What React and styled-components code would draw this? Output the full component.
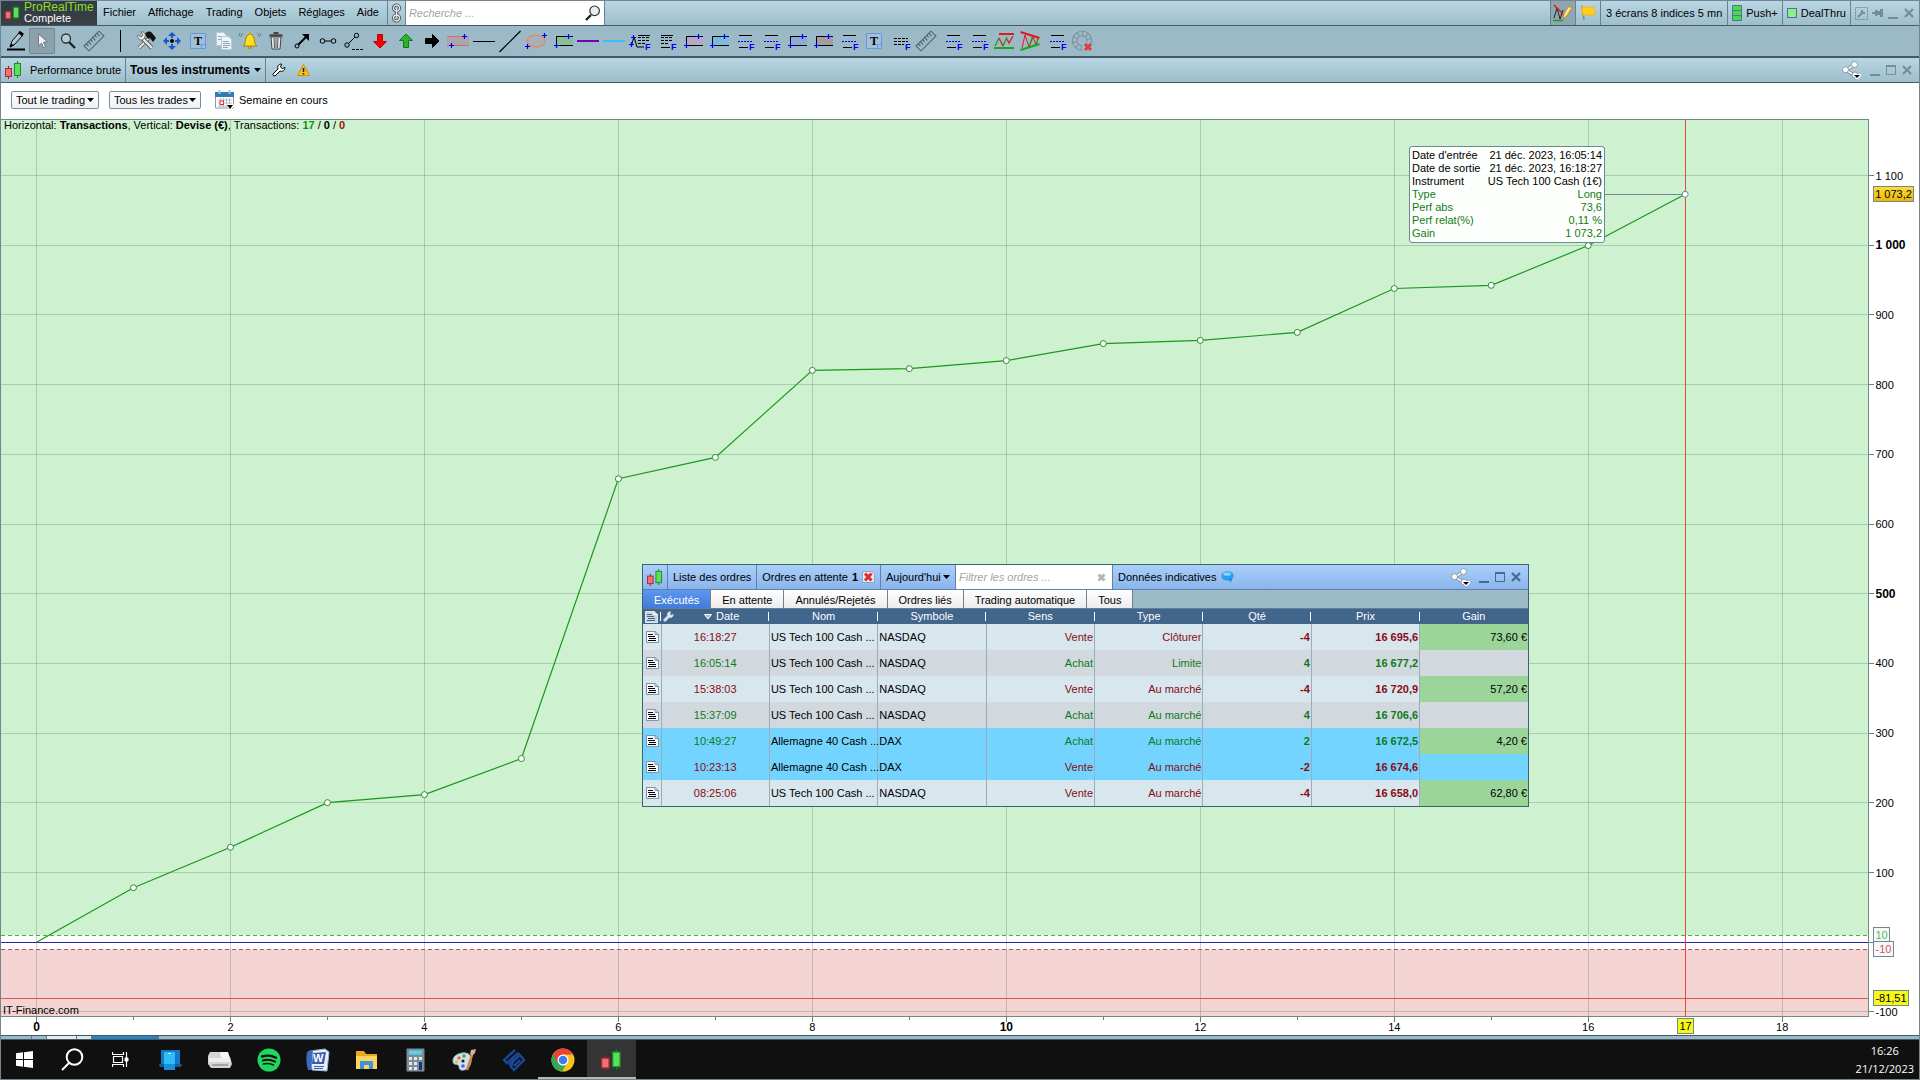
import React, {useLayoutEffect, useRef, useState} from 'react';
import styled, {createGlobalStyle} from 'styled-components';

const GlobalStyle = createGlobalStyle`
  * {
    box-sizing: border-box;
  }

  body {
    margin: 0;
    background: #ffffff;
    color: #000000;
    font: 11px/13px "Liberation Sans", Arial, sans-serif;
  }

  button, input, select {
    margin: 0;
    padding: 0;
    border: none;
    border-radius: 0;
    background: none;
    color: inherit;
    font: inherit;
    outline: none;
  }

  svg {
    display: block;
    flex: none;
  }
`;

const Page = styled.div`
  display: flex;
  flex-direction: column;
  height: 100vh;
  min-height: 720px;
  border: 1px solid #74858f;
  overflow: hidden;
`;

const Bar = styled.div`
  display: flex;
  flex: none;
  height: 25px;
  background: linear-gradient(#b8d6e3, #9fbecc);
  border-bottom: 1px solid #425a68;
`;

const Cell = styled.div`
  display: flex;
  align-items: center;
  gap: ${p => p.$gap || 0}px;
  padding: 0 ${p => p.$pad === undefined ? 5 : p.$pad}px;
  background: ${p => p.$pressed ? '#8fa5b0' : 'none'};
  border-right: ${p => p.$line ? `1px solid ${p.$blue ? '#5c83b0' : '#67818f'}` : 'none'};
  white-space: nowrap;
`;

const Spacer = styled.div`
  flex: 1;
`;

const IconButton = styled.button`
  display: grid;
  place-items: center;
  flex: none;
  width: ${p => p.$w || 16}px;
  height: 100%;
  color: ${p => p.$hue || '#778c99'};
  cursor: pointer;
`;

const TextButton = styled.button`
  display: flex;
  align-items: center;
  gap: 4px;
  height: 100%;
  padding: 0 ${p => p.$pad || 0}px;
  white-space: nowrap;
  cursor: pointer;
`;

const Brand = styled.div`
  display: flex;
  align-items: center;
  gap: 4px;
  width: 96px;
  padding-left: 4px;
  background: linear-gradient(#2f3b42, #394046);
  color: #ffffff;
  line-height: 11px;
`;

const BrandName = styled.div`
  font-size: 12px;
  color: #8fdc25;
`;

const Menu = styled.nav`
  display: flex;
  padding-right: 2px;
  padding-bottom: 1px;
  border-right: 1px solid #67818f;
`;

const SearchBox = styled.label`
  display: flex;
  align-items: center;
  width: ${p => p.$w}px;
  padding: 0 3px;
  background: #ffffff;
  border-right: 1px solid ${p => p.$blue ? '#5c83b0' : '#67818f'};
`;

const SearchInput = styled.input`
  flex: 1;
  min-width: 0;
  height: 100%;

  &::placeholder {
    color: #a5a5a5;
    font-style: italic;
    opacity: 1;
  }
`;

const Toolbar = styled.div`
  display: flex;
  flex: none;
  height: 32px;
  padding: 0 2px;
  background: #9bb9c6;
  border-bottom: 2px solid #435966;
`;

const ToolButton = styled.button`
  flex: none;
  width: 26px;
  height: 26px;
  margin: 2px 0;
  background: ${p => p.$active ? '#8ba2ad' : 'none'};
  box-shadow: ${p => p.$active ? 'inset 0 0 0 1px #718792' : 'none'};
  border-radius: 2px;
`;

const Divider = styled.div`
  width: 1px;
  height: 22px;
  margin: 4px 12px 4px 13px;
  background: #000000;
`;

const Filters = styled.div`
  display: flex;
  flex: none;
  align-items: center;
  gap: 10px;
  height: 36px;
  padding: 0 10px 2px;
`;

const SelectWrap = styled.div`
  display: inline-grid;
  align-items: center;
  height: ${p => p.$boxed ? '18px' : '100%'};
  border: ${p => p.$boxed ? '1px solid #7b8b97' : 'none'};
  border-radius: 2px;
  background: ${p => p.$boxed ? 'linear-gradient(#ffffff, #eef1f4)' : 'none'};

  > * {
    grid-area: 1 / 1;
  }

  > svg {
    justify-self: end;
    margin-right: ${p => p.$boxed ? 4 : 0}px;
    pointer-events: none;
  }
`;

const Select = styled.select`
  appearance: none;
  height: 100%;
  padding-left: ${p => p.$boxed ? 4 : 0}px;
  padding-right: ${p => p.$boxed ? 12 : p.$bold ? 11 : 9}px;
  font-weight: ${p => p.$bold ? 'bold' : 'normal'};
  font-size: ${p => p.$bold ? 12 : 11}px;
`;

const PeriodButton = styled(TextButton)`
  margin-left: 3px;
`;

const ChartArea = styled.main`
  position: relative;
  flex: 1;
  min-height: 0;
`;

const ChartSvg = styled.svg`
  position: absolute;
  inset: 0;

  text {
    font-size: 11px;
  }

  text.major {
    font-size: 12px;
    font-weight: bold;
  }
`;

const Legend = styled.div`
  position: absolute;
  left: 3px;
  top: 0;
`;

const Hue = styled.b`
  color: ${p => p.$hue};
`;

const Tip = styled.dl`
  position: absolute;
  width: 196px;
  margin: 0;
  padding: 2px;
  background: rgba(255, 255, 255, 0.94);
  border: 1px solid #6d8894;
  border-radius: 3px;
`;

const TipRow = styled.div`
  display: flex;
  justify-content: space-between;
  color: ${p => p.$green ? '#127c16' : '#000000'};

  dd {
    margin: 0;
  }
`;

const OrdersWindow = styled.section`
  position: absolute;
  left: 641px;
  top: 445px;
  width: 887px;
  border: 1px solid #3f6272;
  background: #9bb9c6;
`;

const OrdersBar = styled(Bar)`
  background: linear-gradient(#abcffb, #8bb5ea);
  border-color: #5c83b0;
`;

const Tabs = styled.div`
  display: flex;
  height: 19px;
  border-bottom: 1px solid #5f7f92;
`;

const Tab = styled.button`
  padding: 2px 11px 0;
  border-right: 1px solid #6f838d;
  background: ${p => p.$active ? 'linear-gradient(#5f97ee, #427bd8)' : 'linear-gradient(#ffffff, #ececec)'};
  color: ${p => p.$active ? '#ffffff' : '#000000'};
`;

const Table = styled.table`
  width: 100%;
  table-layout: fixed;
  border-collapse: collapse;
`;

const Th = styled.th`
  height: 15px;
  padding: 0;
  background: ${p => p.$last ? '#41658b' : 'linear-gradient(#ffffff, #ffffff) right center / 1px 9px no-repeat #41658b'};
  color: #ffffff;
  font-weight: normal;
`;

const ThInner = styled.div`
  display: flex;
  align-items: center;
  justify-content: ${p => p.$center ? 'center' : 'flex-start'};
  padding-left: ${p => p.$center ? 0 : 2}px;
`;

const SortLabel = styled.span`
  display: flex;
  flex: 1;
  align-items: center;
  justify-content: center;
  gap: 4px;
`;

const rowFill = {light: '#d8e6ed', grey: '#d1d8de', blue: '#73d5ff'};

const Tr = styled.tr`
  height: 26px;
  background: ${p => rowFill[p.$fill]};
`;

const Td = styled.td`
  padding: 0 1px;
  text-align: ${p => p.$align || 'left'};
  color: ${p => p.$side === 'sell' ? '#8b0a14' : p.$side === 'buy' ? '#0e7a1c' : '#000000'};
  font-weight: ${p => p.$bold ? 'bold' : 'normal'};
  background: ${p => p.$gain ? '#9bd59a' : 'none'};
  border-right: ${p => p.$last ? 'none' : '1px solid #9cadb8'};
  white-space: nowrap;
`;

const Strip = styled.div`
  display: flex;
  flex: none;
  height: 5px;
  background: #9bb9c6;
  border-top: 1px solid #425a68;
  border-bottom: 1px solid #425a68;
`;

const StripPart = styled.div`
  width: ${p => p.$w}px;
  background: ${p => p.$hue || 'none'};
  border-right: 1px solid #5f7886;
`;

const Taskbar = styled.footer`
  display: flex;
  flex: none;
  height: 39px;
  background: #101010;
  color: #ffffff;
`;

const TaskGroup = styled.div`
  display: flex;
  margin-right: 2px;
`;

const TaskButton = styled.button`
  display: grid;
  place-items: center;
  width: ${p => p.$w || 49}px;
  background: ${p => p.$active ? '#343434' : 'none'};
  box-shadow: ${p => p.$open ? 'inset 0 -2px 0 #b8b8b8' : 'none'};
`;

const Clock = styled.time`
  display: flex;
  flex-direction: column;
  justify-content: center;
  margin-left: auto;
  padding-right: 5px;
  text-align: center;
  font: 11px/18px "Open Sans", "Noto Sans", sans-serif;
`;

// ---- small icons ----

const Caret = () => (
	<svg width="7" height="4" viewBox="0 0 7 4"><path d="M0 0h7L3.5 4z" fill="#000"/></svg>
);

const Candles = ({w = 17, h = 18}) => (
	<svg width={w} height={h} viewBox="0 0 17 18">
		<path d="M3.5 5v13" stroke="#a01820"/>
		<rect x="0.5" y="7.5" width="6" height="8" fill="#f07078" stroke="#b02830"/>
		<path d="M12.5 0v17" stroke="#108020"/>
		<rect x="9.5" y="2.5" width="6" height="12" fill="#5ce05c" stroke="#189028"/>
	</svg>
);

const Lens = ({size = 16}) => (
	<svg width={size} height={size} viewBox="0 0 16 16">
		<path d="M6 10L1 15" stroke="#222" strokeWidth="2.4"/>
		<circle cx="9.6" cy="5.8" r="4.8" fill="#e8eef0" stroke="#333" strokeWidth="1.2"/>
	</svg>
);

const Chain = () => (
	<svg width="11" height="20" viewBox="0 0 11 20" fill="none">
		<g stroke="#4a4f52" strokeWidth="3">
			<rect x="2.5" y="2" width="6" height="6" rx="3"/>
			<rect x="2.5" y="12" width="6" height="6" rx="3"/>
			<path d="M5.5 6v8"/>
		</g>
		<g stroke="#e8e8e8" strokeWidth="1.3">
			<rect x="2.5" y="2" width="6" height="6" rx="3"/>
			<rect x="2.5" y="12" width="6" height="6" rx="3"/>
			<path d="M5.5 6v8"/>
		</g>
	</svg>
);

const Wrench = ({size = 14, fill = '#fff', stroke = '#000'}) => (
	<svg width={size} height={size} viewBox="0 0 14 14">
		<path
			d="M1 11l5-5C5 3.500 6.500 1 9.500 1L8.600 4.200l1.600 1.400L13 4.500C13 7.500 10.500 9 8 8l-5 5c-1.500 0-2.500-1-2-2z"
			fill={fill} stroke={stroke}
		/>
	</svg>
);

const Warning = () => (
	<svg width="13" height="12" viewBox="0 0 13 12">
		<path d="M6.500 0.500L12.500 11.500H0.500z" fill="#fdc321" stroke="#d08a10" strokeLinejoin="round"/>
		<path d="M6.500 4v4M6.500 9v1.500" stroke="#222" strokeWidth="1.600"/>
	</svg>
);

const Share = () => (
	<svg width="20" height="18" viewBox="0 0 20 18">
		<path d="M12 4L4 9l8 5" fill="none" stroke="#6a7c86" strokeWidth="3"/>
		<path d="M12 4L4 9l8 5" fill="none" stroke="#fff" strokeWidth="1.600"/>
		<g fill="#fff" stroke="#7b8c96" strokeWidth="0.800">
			<circle cx="12.500" cy="3.500" r="3"/>
			<circle cx="3.500" cy="8.800" r="3"/>
			<circle cx="13" cy="14" r="3"/>
		</g>
		<path d="M11 13h8v2l-3 3h-2z" fill="#fff"/>
		<path d="M12 14h6l-3 3z" fill="#000"/>
	</svg>
);

const Minimize = () => (
	<svg width="10" height="12" viewBox="0 0 10 12"><path d="M0 11h10" stroke="currentColor" strokeWidth="2"/></svg>
);

const Maximize = () => (
	<svg width="10" height="10" viewBox="0 0 10 10">
		<path d="M0.500 0v9.500h9V0" fill="none" stroke="currentColor"/>
		<path d="M0 1h10" stroke="currentColor" strokeWidth="2"/>
	</svg>
);

const Close = () => (
	<svg width="10" height="10" viewBox="0 0 10 10">
		<path d="M1 1l8 8M9 1L1 9" stroke="currentColor" strokeWidth="2.200"/>
	</svg>
);

const WrenchBox = () => (
	<svg width="13" height="13" viewBox="0 0 13 13" fill="none" stroke="currentColor">
		<rect x="0.500" y="0.500" width="12" height="12" strokeDasharray="2 1"/>
		<path d="M3 10l4-4M7 3v3h3" strokeWidth="2"/>
	</svg>
);

const Pin = () => (
	<svg width="11" height="10" viewBox="0 0 11 10" fill="currentColor">
		<path d="M0 4h3V2h2l1 1h2V1h3v8H8V7H6L5 8H3V6H0z"/>
	</svg>
);

const DrawMode = () => (
	<svg width="20" height="18" viewBox="0 0 20 18" fill="none">
		<path d="M1 14L4 4l3 11 3-9" stroke="#222"/>
		<path d="M1 1l9 9" stroke="#d02020" strokeWidth="1.600"/>
		<path d="M0 16.500h10" stroke="#18a018" strokeWidth="1.500"/>
		<path d="M10 15l1-5 5-8 3 2-5 8z" fill="#fcd24c" stroke="#a87820" strokeWidth="0.600"/>
		<path d="M12 11l4-7" stroke="#fff0c0" strokeWidth="1.200"/>
	</svg>
);

const Flag = () => (
	<svg width="16" height="16" viewBox="0 0 16 16">
		<path d="M2 1l2 14" stroke="#888" strokeWidth="1.500"/>
		<path d="M1.500 2.500C5 0 9 4 14 1.500l1 8C10 12 7 8 3 10.500z" fill="#ffcf1a" stroke="#f0a800" strokeWidth="0.600"/>
	</svg>
);

const PushLevels = () => (
	<svg width="10" height="16" viewBox="0 0 10 16">
		<path d="M0.500 0.500h9v15h-9z" fill="#4cd84c" stroke="#4a7890"/>
		<path d="M0 5.500h10M0 10.500h10" stroke="#4a7890"/>
	</svg>
);

const DealBox = () => (
	<svg width="10" height="10" viewBox="0 0 10 10"><rect x="0.500" y="0.500" width="9" height="9" fill="#8cee8c" stroke="#4a7890"/></svg>
);

const Calendar = () => (
	<svg width="21" height="20" viewBox="0 0 21 20">
		<path d="M1.500 3h18v15h-18z" fill="#fff" stroke="#8a9aa8"/>
		<path d="M1 2h19v5H1z" fill="#2e7fb4"/>
		<path d="M4 10h14M4 13h14M4 16h9M6.500 8v9M9.500 8v9M12.500 8v9M15.500 8v6" stroke="#b4c0ca"/>
		<rect x="6" y="11" width="3.500" height="3.500" fill="#fff" stroke="#e03030"/>
		<path d="M5.500 0v4M15.500 0v4" stroke="#a8c4d4" strokeWidth="2"/>
		<path d="M12 14.500h8v2l-3 3h-2z" fill="#fff"/>
		<path d="M13 15h6l-3 4z" fill="#000"/>
	</svg>
);

const RedCross = () => (
	<svg width="13" height="12" viewBox="0 0 13 12">
		<path d="M0.500 0.500h9l3 2v9h-12z" fill="#e4ecf4" stroke="#8ca4c0"/>
		<path d="M3 2.500l6.500 7M9.500 2.500L3 9.500" stroke="#e8282e" strokeWidth="3"/>
	</svg>
);

const ClearCross = () => (
	<svg width="9" height="9" viewBox="0 0 9 9"><path d="M1.500 1.500l6 6M7.500 1.500l-6 6" stroke="#b4b8bc" strokeWidth="3"/></svg>
);

const Bubble = () => (
	<svg width="13" height="12" viewBox="0 0 13 12">
		<ellipse cx="6.500" cy="5" rx="6.200" ry="4.800" fill="#28a0ec"/>
		<path d="M8 8l2 4 1-5z" fill="#1c88d4"/>
		<ellipse cx="6" cy="3" rx="4" ry="1.800" fill="#8cd4fc"/>
	</svg>
);

const Doc = ({light}) => (
	<svg width="13" height="12" viewBox="0 0 13 12">
		<path d="M0.500 0.500h8.500l3.500 3v8H0.500z" fill={light ? '#c8d4e0' : '#f6fafc'} stroke={light ? '#dfe8f0' : '#7c94ac'}/>
		<path d="M9 0.500v3h3.500" fill="none" stroke={light ? '#fff' : '#7c94ac'}/>
		<path d="M2 3.500h5M2 5.500h7M3 7.500h7M2 9.500h8" stroke={light ? '#4a6684' : '#000'}/>
	</svg>
);

const SortArrow = () => (
	<svg width="8" height="6" viewBox="0 0 8 6"><path d="M0.500 0.500h7L4 5z" fill="#a8bccf" stroke="#fff"/></svg>
);

// ---- drawing tools, 26x26 each ----

const Plus = ({x, y}) => (
	<path d={`M${x - 2.5} ${y}h5M${x} ${y - 2.5}v5`} stroke="#0000f0" strokeWidth="1.2"/>
);

const LetterF = () => (
	<text x="18" y="22" fontSize="9" fontWeight="bold" fill="#0000f0">F</text>
);

const Ruler = () => (
	<g transform="rotate(-45 13 13)" fill="none" stroke="#4c5a62">
		<rect x="2.500" y="9.500" width="21" height="7"/>
		<path d="M5.500 9.500v3M8.500 9.500v4M11.500 9.500v3M14.500 9.500v4M17.500 9.500v3M20.500 9.500v4"/>
	</g>
);

const TextTool = () => (
	<g>
		<path d="M5.500 5.500h15v15h-15z" fill="#a2c0d8" stroke="#6196ea"/>
		<path d="M20.500 16.500h-4v4" fill="none" stroke="#6196ea"/>
		<text x="13" y="17" fontSize="12" fontWeight="bold" textAnchor="middle" fontFamily="Liberation Serif, serif">T</text>
	</g>
);

const BoxTool = ({fill}) => (
	<g>
		<path d="M7 9h17v8H7z" fill={fill}/>
		<path d="M24 8.500H7.500v9H24" fill="none" stroke="#000" shapeRendering="crispEdges"/>
		<Plus x={7.5} y={17.5}/>
		<Plus x={19.5} y={8.5}/>
	</g>
);

const LevelsTool = () => (
	<g shapeRendering="crispEdges">
		<path d="M8 7.500h13M8 19.500h9" stroke="#000"/>
		<path d="M7 13.500h14" stroke="#0000f0" strokeDasharray="2 1"/>
		<LetterF/>
	</g>
);

const FibLines = () => (
	<g stroke="#000" shapeRendering="crispEdges">
		<path d="M11 7.500h12"/>
		<path d="M11 9.500h12M11 12.500h12M11 15.500h8" strokeDasharray="3 1"/>
	</g>
);

const BlockArrow = ({turn = 0, fill, stroke = fill}) => (
	<path d="M10.500 6.500h5v7h4l-6.500 6.500-6.500-6.500h4z" fill={fill} stroke={stroke} transform={`rotate(${turn} 13 13)`}/>
);

const tools = [
	['Dessin', <g>
		<path d="M4 21.500h18" stroke="#000" strokeWidth="2"/>
		<path d="M7 19l2-6 7-8 4 2-8 9z" fill="#b4c8d0" stroke="#000"/>
		<path d="M16 4l4 3" stroke="#000" strokeWidth="3"/>
		<path d="M7 19.500l1-4 3 2z" fill="#000"/>
	</g>],
	['Pointeur', <path d="M9.500 6v12l3-3 2 5 2-1-2-5h4z" fill="#f2f2f2" stroke="#5c6c76" strokeWidth="0.8"/>],
	['Loupe', <g>
		<path d="M14 14l6 6" stroke="#222" strokeWidth="2.4"/>
		<circle cx="11" cy="10.5" r="4.5" fill="#b4ccd6" stroke="#333" strokeWidth="1.3"/>
	</g>],
	['Mesure', <Ruler/>],
	null,
	['Outils', <g>
		<path d="M6 20L16 10" stroke="#555" strokeWidth="3.4"/>
		<path d="M6 20L16 10" stroke="#eee" strokeWidth="1.8"/>
		<path d="M12 6c2-3 5-3 7-1l4 5-3 4-3-4-2 1z" fill="#111"/>
		<path d="M9 10l10 10" stroke="#555" strokeWidth="4"/>
		<path d="M9 10l10 10" stroke="#e8e8e8" strokeWidth="2.4"/>
		<path d="M5 7l3 2 2-2-2-3c3-1 5 2 4 5s-4 4-6 2-2-3-1-4z" fill="#eee" stroke="#555" strokeWidth="0.8"/>
	</g>],
	['Déplacer', <g fill="#1558c8">
		<path d="M13 4l4 4h-3v2h-2V8H9zM13 22l4-4h-3v-2h-2v2H9zM4 13l4-4v3h2v2H8v3zM22 13l-4-4v3h-2v2h2v3z"/>
		<circle cx="13" cy="13" r="2" fill="#000"/>
	</g>],
	['Texte', <TextTool/>],
	['Copier', <g fill="#edf3f6" stroke="#b8cbd4">
		<path d="M5.500 4.500h7l3 3v10h-10z"/>
		<path d="M10.500 8.500h7l3 3v10h-10z"/>
		<path d="M12 13.500h6M12 15.500h7M12 17.500h7M12 19.500h5M7 8.500h3M7 11.500h3" stroke="#8fa4b0"/>
	</g>],
	['Alerte', <g>
		<path d="M6 18c3-2 2-5 3-8 1-3 3-4 4-4s3 1 4 4c1 3 0 6 3 8z" fill="#ffdf20" stroke="#a08000"/>
		<path d="M11 19h4v2h-4z" fill="#c89c00"/>
		<path d="M12 4h2v2h-2z" fill="#d8b000"/>
		<path d="M6 5c-2 1-2 3-2 4M3 5L2 8M20 5c2 1 2 3 2 4M23 5l1 3" fill="none" stroke="#6c7c86"/>
	</g>],
	['Supprimer', <g>
		<path d="M8 9h10l-1 12H9z" fill="#ececec" stroke="#444"/>
		<path d="M6.500 7.500h13" stroke="#444" strokeWidth="2.4"/>
		<path d="M10.500 5h5" stroke="#444" strokeWidth="2"/>
		<path d="M11 10l.5 10M13 10v10M15 10l-.5 10" stroke="#555"/>
	</g>],
	['Flèche', <g>
		<path d="M8 18L17 9" stroke="#000" strokeWidth="2"/>
		<path d="M13 6h7v7z" fill="#000"/>
		<circle cx="8" cy="18" r="2" fill="#9bb9c6" stroke="#000"/>
	</g>],
	['Segment', <g fill="none" stroke="#000">
		<circle cx="7.500" cy="13" r="2.300"/>
		<path d="M10 13h6"/>
		<circle cx="18.500" cy="13" r="2.300"/>
	</g>],
	['Segment prolongé', <g fill="none" stroke="#000">
		<circle cx="6" cy="17" r="2.200"/>
		<path d="M8 15l6-6"/>
		<path d="M11 21.500h11" strokeDasharray="3 1"/>
		<circle cx="15.500" cy="7.500" r="2.200"/>
	</g>],
	['Vente', <BlockArrow fill="#f40000" stroke="#c00000"/>],
	['Achat', <BlockArrow fill="#28b428" stroke="#147814" turn={180}/>],
	['Flèche droite', <BlockArrow fill="#000" turn={-90}/>],
	['Canal', <g>
		<path d="M2 9h22v8H2z" fill="#c8888860"/>
		<path d="M2 8.500h22M2 17.500h22" stroke="#d86c6c"/>
		<Plus x={6.5} y={17.5}/>
		<Plus x={19.5} y={8.5}/>
	</g>],
	['Ligne horizontale', <path d="M2 13.500h22" stroke="#000"/>],
	['Ligne', <path d="M2.500 24L23.500 3" stroke="#000" strokeWidth="1.2"/>],
	['Ellipse', <g>
		<ellipse cx="13" cy="13" rx="9" ry="6" fill="#c8a09a60" stroke="#e08860" strokeWidth="1.2"/>
		<Plus x={4.5} y={18.5}/>
		<Plus x={21.5} y={7.5}/>
	</g>],
	['Zone verte', <BoxTool fill="#84c09a"/>],
	['Ligne violette', <path d="M2 13h22" stroke="#7400b4" strokeWidth="2"/>],
	['Ligne bleue', <path d="M2 13h22" stroke="#46b8f8" strokeWidth="2"/>],
	['Extension Fibonacci', <g>
		<path d="M4.500 17L7 9l3 10h7" fill="none" stroke="#000"/>
		<FibLines/>
		<Plus x={6.5} y={9.5}/>
		<Plus x={4.5} y={16.5}/>
		<LetterF/>
	</g>],
	['Retracement', <g>
		<g transform="translate(-3 0)"><FibLines/></g>
		<path d="M8 19.500h9" stroke="#000"/>
		<LetterF/>
	</g>],
	['Zone rose', <BoxTool fill="#b4a8c4"/>],
	['Zone cyan', <BoxTool fill="#7cbcd8"/>],
	['Niveaux 1', <LevelsTool/>],
	['Niveaux 2', <LevelsTool/>],
	['Zone bleue', <BoxTool fill="#8cacd8"/>],
	['Zone brune', <BoxTool fill="#a89ca4"/>],
	['Niveaux 3', <LevelsTool/>],
	['Note', <TextTool/>],
	['Niveaux 4', <g>
		<path d="M7 10.500h14M7 13.500h14M7 16.500h10" stroke="#000" strokeDasharray="3 1" shapeRendering="crispEdges"/>
		<LetterF/>
	</g>],
	['Règle', <Ruler/>],
	['Niveaux 5', <LevelsTool/>],
	['Niveaux 6', <LevelsTool/>],
	['Supports et résistances', <g fill="none">
		<path d="M8 6h15" stroke="#d81c1c" strokeWidth="2"/>
		<path d="M3 20h20" stroke="#18a818" strokeWidth="2"/>
		<path d="M4 18l4-8M12 18l4-9" stroke="#18a018" strokeWidth="1.3"/>
		<path d="M8 10l4 8M16 11l2 4 4-7" stroke="#d82020" strokeWidth="1.3"/>
	</g>],
	['Triangle', <g fill="none">
		<path d="M3.500 4l19 6" stroke="#e01818" strokeWidth="2"/>
		<path d="M3.500 22l19-6" stroke="#18a818" strokeWidth="2"/>
		<path d="M5 20L8 7l4 12 4-10 3 8 2-7" stroke="#d82020"/>
		<path d="M12 19l3-10M19 17l2-6" stroke="#18a018"/>
	</g>],
	['Niveaux 7', <LevelsTool/>],
	['Effacer', <g fill="none">
		<path d="M20 15A7.300 7.300 0 1 0 13 20" stroke="#788e9a" strokeWidth="5.4"/>
		<path d="M20 15A7.300 7.300 0 1 0 13 20" stroke="#9bb9c6" strokeWidth="3.6" strokeDasharray="3.6 0.9"/>
		<path d="M16 16l6 6M22 16l-6 6" stroke="#e03c3c" strokeWidth="3"/>
	</g>],
];

// ---- taskbar icons ----

const taskIcons = [
	['Spotify', <svg width="24" height="24" viewBox="0 0 24 24" fill="none" stroke="#101010" strokeLinecap="round">
		<circle cx="12" cy="12" r="11.5" fill="#1ed760" stroke="none"/>
		<path d="M5 8.500c5-1.500 10-1 14 1.200" strokeWidth="2.4"/>
		<path d="M6 12.500c4-1.200 8-.7 12 1.200" strokeWidth="2"/>
		<path d="M6.500 16c4-1 7-.5 10 1" strokeWidth="1.6"/>
	</svg>],
	['Word', <svg width="24" height="24" viewBox="0 0 24 24">
		<path d="M4 3l15-2 4 3-2 19-15-1z" fill="#e8f0fa" stroke="#9ab0d4"/>
		<path d="M1 4c3-2 4-2 6-2L5 22H2C0 16 0 10 1 4z" fill="#3c68b8"/>
		<path d="M7 5l13-1-2 12H6z" fill="#3560ac"/>
		<text x="7" y="14" fontSize="11" fontWeight="bold" fill="#fff">W</text>
		<path d="M8 18.500h10M8 20.500h9" stroke="#3560ac"/>
	</svg>],
	['Explorateur', <svg width="23" height="20" viewBox="0 0 23 20">
		<path d="M1 1h8l2 3h11v14H1z" fill="#e8a820"/>
		<path d="M1 6h21v13H1z" fill="#ffd35c"/>
		<path d="M5 19v-8h13v8h-4v-4H9v4z" fill="#3c94dc"/>
	</svg>],
	['Calculatrice', <svg width="19" height="24" viewBox="0 0 19 24">
		<rect x="0.500" y="0.500" width="18" height="23" rx="1" fill="#7f8c96"/>
		<path d="M3 2.500h13v4H3z" fill="#5cd0f4"/>
		<path d="M3 9h3v3H3zM8 9h3v3H8zM13 9h3v3h-3zM3 14h3v3H3zM8 14h3v3H8zM3 19h3v3H3zM8 19h3v3H8z" fill="#e4e8ec"/>
		<path d="M13 14h3v8h-3z" fill="#123c74"/>
	</svg>],
	['Paint', <svg width="25" height="24" viewBox="0 0 25 24">
		<path d="M10 5c7-1 10 3 9 9s-6 9-10 8c-3-1-1-4-3-5s-5 0-5-4c0-5 4-7 9-8z" fill="#d0e2f0" stroke="#94aec4"/>
		<circle cx="7" cy="10" r="1.800" fill="#e86c3c"/>
		<circle cx="12" cy="8" r="1.800" fill="#3cb040"/>
		<circle cx="4.500" cy="14" r="1.400" fill="#f0b020"/>
		<circle cx="11" cy="18" r="1.800" fill="#2c70d0"/>
		<circle cx="11" cy="13" r="1.600" fill="#18242c"/>
		<path d="M15 22l5-15" stroke="#d88438" strokeWidth="2.4"/>
		<path d="M18 6l1-4 5-1-1 4-3 3z" fill="#d8b088"/>
	</svg>],
	['Courtier', <svg width="24" height="24" viewBox="0 0 24 24" fill="none" stroke="#1a469c" strokeWidth="2.400">
		<path d="M13 2L2 12l3 3L16 5M7 17L18 7M12 11l-3 8 3 3 10-10-6-7M12 18l6-6"/>
	</svg>],
];

const Chrome = () => (
	<svg width="24" height="24" viewBox="0 0 24 24">
		<circle cx="12" cy="12" r="11.500" fill="#fbc116"/>
		<path d="M12 12L2 6.300A11.500 11.500 0 0 0 11 23.500l5-8.500z" fill="#34a853"/>
		<path d="M12 6.500h10A11.500 11.500 0 0 0 2 6.300l5 8.500z" fill="#ea4335"/>
		<circle cx="12" cy="12" r="5.500" fill="#fff"/>
		<circle cx="12" cy="12" r="4.300" fill="#3c7cf0"/>
	</svg>
);

const Windows = () => (
	<svg width="17" height="17" viewBox="0 0 17 17" fill="#fff">
		<path d="M0 2.300l7-1V8H0zM8 1.200L17 0v8H8zM0 9h7v6.700l-7-1zM8 9h9v8l-9-1.200z"/>
	</svg>
);

const TaskSearch = () => (
	<svg width="23" height="23" viewBox="0 0 23 23" fill="none" stroke="#fff" strokeWidth="2">
		<circle cx="13.500" cy="9" r="7.800"/>
		<path d="M8 15l-7 7"/>
	</svg>
);

const TaskView = () => (
	<svg width="17" height="17" viewBox="0 0 17 17" fill="none" stroke="#fff">
		<path d="M0.500 1v2.500h11V1M0.500 16v-2.500h11V16M1.500 5.500h9v6h-9zM14.500 1v15" strokeWidth="1.200"/>
		<path d="M13 7h3v3h-3z" fill="#fff"/>
	</svg>
);

const Phone = () => (
	<svg width="23" height="22" viewBox="0 0 23 22">
		<path d="M2 1h19v15H2z" fill="#1478c8"/>
		<path d="M0 15h23l-1 3H1z" fill="#0c5ca4"/>
		<path d="M5 3h11v12H5z" fill="#30bcf8"/>
		<path d="M5 15h11v6H5z" fill="#1890dc"/>
		<path d="M9 4.500h3" stroke="#fff"/>
	</svg>
);

const Printer = () => (
	<svg width="24" height="18" viewBox="0 0 24 18">
		<path d="M2 1h9l2 5h9l2 7-2 4H3l-3-4V5z" fill="#d4d4d4"/>
		<path d="M11 1h9l2 6H13z" fill="#f6f6f6"/>
		<path d="M1 7h21l1 4H1z" fill="#eeeeee"/>
		<path d="M4 13h16v2H4z" fill="#a4a4a4"/>
	</svg>
);

// ---- chart ----

const results = [
	0, 78.2, 136.3, 200.3, 211.8, 263.6, 665, 695.7, 820.5, 823,
	834.6, 859, 863.6, 875, 938, 942.6, 999.6, 1073.2,
];

const Y_TOP = 1181.2;
const Y_BOTTOM = -106.5;
const X_SPAN = 18.89;
const ORIGIN = 35.5;

const useSize = (ref) => {
	const [size, setSize] = useState({w: 0, h: 0});
	
	useLayoutEffect(() => {
		const measure = () => setSize({w: ref.current.clientWidth, h: ref.current.clientHeight});
		measure();
		const observer = new ResizeObserver(measure);
		observer.observe(ref.current);
		return () => observer.disconnect();
	}, [ref]);
	
	return size;
};

const crisp = (n) => Math.floor(n) + 0.5;

const AxisBox = ({x, y, w, label, fill, hue = '#000'}) => (
	<g>
		<rect x={x} y={y} width={w} height="15" fill={fill} stroke="#74868c"/>
		<text x={x + w / 2} y={y + 11.5} textAnchor="middle" fill={hue}>{label}</text>
	</g>
);

const tipRows = [
	["Date d'entrée", '21 déc. 2023, 16:05:14'],
	['Date de sortie', '21 déc. 2023, 16:18:27'],
	['Instrument', 'US Tech 100 Cash (1€)'],
	['Type', 'Long', true],
	['Perf abs', '73,6', true],
	['Perf relat(%)', '0,11 %', true],
	['Gain', '1 073,2', true],
];

const Chart = ({children}) => {
	const ref = useRef(null);
	const {w, h} = useSize(ref);
	
	const right = w - 50.5;
	const bottom = h - 18.5;
	const x = n => ORIGIN + (right - ORIGIN) * n / X_SPAN;
	const y = v => bottom * (Y_TOP - v) / (Y_TOP - Y_BOTTOM);
	
	const columns = [0, 2, 4, 6, 8, 10, 12, 14, 16, 18];
	const odd = [1, 3, 5, 7, 9, 11, 13, 15];
	const levels = [-100, 100, 200, 300, 400, 500, 600, 700, 800, 900, 1000, 1100];
	const last = results.length - 1;
	const format = v => v >= 1000 ? `1 ${String(v - 1000).padStart(3, '0')}` : String(v);
	
	return (
		<ChartArea ref={ref}>
			{w > 100 && (
				<ChartSvg width={w} height={h}>
					<defs>
						<linearGradient id="gold" x1="0" y1="0" x2="0" y2="1">
							<stop offset="0" stopColor="#fbe030"/>
							<stop offset="1" stopColor="#ecb410"/>
						</linearGradient>
					</defs>
					<rect width={right} height={y(10)} fill="#cef2cf"/>
					<rect y={y(-10)} width={right} height={bottom - y(-10)} fill="#f4d3d3"/>
					
					<g shapeRendering="crispEdges">
						<g stroke="#50785a" strokeOpacity="0.3">
							{columns.map(n => <path key={n} d={`M${crisp(x(n))} 0V${bottom}`}/>)}
							{levels.map(v => <path key={v} d={`M0 ${crisp(y(v))}H${right}`}/>)}
						</g>
						<path d={`M0 ${crisp(y(10))}H${right}`} stroke="#48b048" strokeDasharray="4 3"/>
						<path d={`M0 ${crisp(y(-10))}H${right}`} stroke="#b85050" strokeDasharray="4 3"/>
						<path d={`M0 ${crisp(y(0))}H${right}`} stroke="#28289c"/>
						<path d={`M0 ${crisp(y(-81.51) - 1)}H${right}`} stroke="#e25252"/>
						<path d={`M${crisp(x(17))} 0V${bottom}`} stroke="#e64a3c"/>
						<path d={`M0 0.500H${right}V${bottom}H0`} fill="none" stroke="#6d8c7c"/>
						<g stroke="#6d7c84">
							{columns.map(n => <path key={n} d={`M${crisp(x(n))} ${bottom}v5`}/>)}
							{odd.map(n => <path key={n} d={`M${crisp(x(n))} ${bottom}v3`}/>)}
							{[0, ...levels].map(v => <path key={v} d={`M${right} ${crisp(y(v))}h5`}/>)}
						</g>
						<path d={`M${x(17) - 80} ${crisp(y(results[last]))}H${x(17)}`} stroke="#6d8894"/>
					</g>
					
					<polyline
						points={results.map((v, n) => `${x(n)},${y(v)}`).join(' ')}
						fill="none" stroke="#1c961c" strokeWidth="1.200"
					/>
					{results.map((v, n) => n > 0 && (
						<circle key={n} cx={x(n)} cy={y(v)} r="3" fill="#fff" stroke={n === last ? '#6d8894' : '#2c8c34'}/>
					))}
					
					{columns.map(n => (
						<text key={n} className={n % 10 ? '' : 'major'} x={x(n)} y={bottom + 14} textAnchor="middle">{n}</text>
					))}
					{levels.map(v => (
						<text key={v} className={v > 0 && v % 500 === 0 ? 'major' : ''} x={right + 7} y={y(v) + 4}>{format(v)}</text>
					))}
					<AxisBox x={right + 5} y={crisp(y(10) - 8)} w={16} label="10" fill="#f6f8fa" hue="#58bc58"/>
					<AxisBox x={right + 5} y={crisp(y(-10) - 8)} w={20} label="-10" fill="#f6f8fa" hue="#c85858"/>
					<AxisBox x={right + 5} y={crisp(y(-81.51) - 9)} w={35} label="-81,51" fill="#f8f818"/>
					<AxisBox x={right + 5} y={crisp(y(1073.2) - 8)} w={40} label="1 073,2" fill="url(#gold)"/>
					<AxisBox x={crisp(x(17) - 8)} y={bottom + 2} w={16} label="17" fill="#f8f818"/>
					<text x="2" y={bottom - 3}>IT-Finance.com</text>
				</ChartSvg>
			)}
			
			<Legend>
				Horizontal: <b>Transactions</b>, Vertical: <b>Devise (€)</b>, Transactions:{' '}
				<Hue $hue="#10900f">17</Hue> / <b>0</b> / <Hue $hue="#a01010">0</Hue>
			</Legend>
			
			<Tip style={{left: Math.round(x(17)) - 276, top: Math.round(y(results[last])) - 48}}>
				{tipRows.map(([name, value, green]) => (
					<TipRow key={name} $green={green}><dt>{name}</dt><dd>{value}</dd></TipRow>
				))}
			</Tip>
			{children}
		</ChartArea>
	);
};

// ---- orders ----

const orders = [
	['16:18:27', 'US Tech 100 Cash ...', 'NASDAQ', 'Vente', 'Clôturer', '-4', '16 695,6', '73,60 €', 'light'],
	['16:05:14', 'US Tech 100 Cash ...', 'NASDAQ', 'Achat', 'Limite', '4', '16 677,2', '', 'grey'],
	['15:38:03', 'US Tech 100 Cash ...', 'NASDAQ', 'Vente', 'Au marché', '-4', '16 720,9', '57,20 €', 'light'],
	['15:37:09', 'US Tech 100 Cash ...', 'NASDAQ', 'Achat', 'Au marché', '4', '16 706,6', '', 'grey'],
	['10:49:27', 'Allemagne 40 Cash ...', 'DAX', 'Achat', 'Au marché', '2', '16 672,5', '4,20 €', 'blue'],
	['10:23:13', 'Allemagne 40 Cash ...', 'DAX', 'Vente', 'Au marché', '-2', '16 674,6', '', 'blue'],
	['08:25:06', 'US Tech 100 Cash ...', 'NASDAQ', 'Vente', 'Au marché', '-4', '16 658,0', '62,80 €', 'light'],
];

const DropDown = ({label, value, boxed, bold}) => (
	<SelectWrap $boxed={boxed}>
		<Select aria-label={label} $boxed={boxed} $bold={bold}>
			<option>{value}</option>
		</Select>
		<Caret/>
	</SelectWrap>
);

const WindowButtons = ({hue}) => (
	<>
		<IconButton $hue={hue} aria-label="Réduire"><Minimize/></IconButton>
		<IconButton $hue={hue} aria-label="Agrandir"><Maximize/></IconButton>
		<IconButton $hue={hue} aria-label="Fermer"><Close/></IconButton>
	</>
);

const Orders = () => (
	<OrdersWindow>
		<OrdersBar>
			<Cell $line $blue $pad={4}><Candles w={16} h={17}/></Cell>
			<Cell $line $blue>Liste des ordres</Cell>
			<Cell $line $blue $gap={4}>
				Ordres en attente <b>1</b>
				<IconButton $w={13} aria-label="Annuler les ordres"><RedCross/></IconButton>
			</Cell>
			<Cell $line $blue><DropDown label="Période" value="Aujourd'hui"/></Cell>
			<SearchBox $w={157} $blue>
				<SearchInput aria-label="Filtrer les ordres" placeholder="Filtrer les ordres ..."/>
				<IconButton aria-label="Vider le filtre"><ClearCross/></IconButton>
			</SearchBox>
			<Cell $gap={5}>Données indicatives <Bubble/></Cell>
			<Spacer/>
			<IconButton $w={30} aria-label="Partager"><Share/></IconButton>
			<WindowButtons hue="#416a94"/>
			<Cell $pad={2}/>
		</OrdersBar>
		<Tabs role="tablist">
			{['Exécutés', 'En attente', 'Annulés/Rejetés', 'Ordres liés', 'Trading automatique', 'Tous'].map((name, i) => (
				<Tab key={name} role="tab" aria-selected={i === 0} $active={i === 0}>{name}</Tab>
			))}
		</Tabs>
		<Table>
			<colgroup>
				<col width="18"/>
				<col/><col/><col/><col/><col/><col/><col/><col/>
			</colgroup>
			<thead>
				<tr>
					<Th aria-label="Détail"><ThInner><Doc light/></ThInner></Th>
					<Th>
						<ThInner>
							<Wrench size={11} fill="#dfe8f0" stroke="#dfe8f0"/>
							<SortLabel><SortArrow/>Date</SortLabel>
						</ThInner>
					</Th>
					{['Nom', 'Symbole', 'Sens', 'Type', 'Qté', 'Prix', 'Gain'].map(name => (
						<Th key={name} $last={name === 'Gain'}><ThInner $center>{name}</ThInner></Th>
					))}
				</tr>
			</thead>
			<tbody>
				{orders.map(([time, name, symbol, way, type, qty, price, gain, fill]) => {
					const side = way === 'Vente' ? 'sell' : 'buy';
					return (
						<Tr key={time} $fill={fill}>
							<Td><ThInner><Doc/></ThInner></Td>
							<Td $align="center" $side={side}>{time}</Td>
							<Td>{name}</Td>
							<Td>{symbol}</Td>
							<Td $align="right" $side={side}>{way}</Td>
							<Td $align="right" $side={side}>{type}</Td>
							<Td $align="right" $side={side} $bold>{qty}</Td>
							<Td $align="right" $side={side} $bold>{price}</Td>
							<Td $align="right" $gain={!!gain} $last>{gain}</Td>
						</Tr>
					);
				})}
			</tbody>
		</Table>
	</OrdersWindow>
);

export default function App() {
	return (
		<Page>
			<GlobalStyle/>
			
			<Bar as="header">
				<Brand>
					<Candles w={15} h={16}/>
					<div>
						<BrandName>ProRealTime</BrandName>
						Complete
					</div>
				</Brand>
				<Menu>
					{['Fichier', 'Affichage', 'Trading', 'Objets', 'Réglages', 'Aide'].map(name => (
						<TextButton key={name} $pad={6}>{name}</TextButton>
					))}
				</Menu>
				<Cell $line $pad={3}><Chain/></Cell>
				<SearchBox $w={199}>
					<SearchInput aria-label="Recherche" placeholder="Recherche ..."/>
					<Lens/>
				</SearchBox>
				<Spacer/>
				<Cell $line $pad={0}/>
				<Cell $line $pressed $pad={2}><DrawMode/></Cell>
				<Cell $line $pad={4}><Flag/></Cell>
				<Cell $line>3 écrans 8 indices 5 mn</Cell>
				<Cell $line $gap={4} $pad={4}><PushLevels/>Push+</Cell>
				<Cell $line $gap={4} $pad={4}><DealBox/>DealThru</Cell>
				<Cell $pad={2}>
					<IconButton aria-label="Configurer"><WrenchBox/></IconButton>
					<IconButton aria-label="Épingler"><Pin/></IconButton>
					<IconButton aria-label="Réduire"><Minimize/></IconButton>
					<IconButton aria-label="Fermer"><Close/></IconButton>
				</Cell>
			</Bar>
			
			<Toolbar role="toolbar">
				{tools.map((tool, i) => tool ? (
					<ToolButton key={i} aria-label={tool[0]} $active={i === 1}>
						<svg width="26" height="26" viewBox="0 0 26 26">{tool[1]}</svg>
					</ToolButton>
				) : <Divider key={i}/>)}
			</Toolbar>
			
			<Bar>
				<Cell $line $gap={8} $pad={4}><Candles/>Performance brute</Cell>
				<Cell $line $pad={4}><DropDown label="Instruments" value="Tous les instruments" bold/></Cell>
				<Cell $gap={10}>
					<IconButton aria-label="Paramètres"><Wrench/></IconButton>
					<Warning/>
				</Cell>
				<Spacer/>
				<IconButton $w={30} aria-label="Partager"><Share/></IconButton>
				<WindowButtons/>
				<Cell $pad={2}/>
			</Bar>
			
			<Filters>
				<DropDown label="Trading" value="Tout le trading" boxed/>
				<DropDown label="Trades" value="Tous les trades" boxed/>
				<PeriodButton><Calendar/>Semaine en cours</PeriodButton>
			</Filters>
			
			<Chart>
				<Orders/>
			</Chart>
			
			<Strip>
				<StripPart $w={31}/>
				<StripPart $w={15}/>
				<StripPart $w={30} $hue="#e8eef4"/>
				<StripPart $w={15} $hue="#dfe8ec"/>
				<StripPart $w={67} $hue="#2b84c0"/>
			</Strip>
			
			<Taskbar>
				<TaskGroup>
					<TaskButton $w={47} aria-label="Démarrer"><Windows/></TaskButton>
					<TaskButton $w={48} aria-label="Rechercher"><TaskSearch/></TaskButton>
					<TaskButton $w={48} aria-label="Vue des tâches"><TaskView/></TaskButton>
				</TaskGroup>
				<TaskButton aria-label="Téléphone"><Phone/></TaskButton>
				<TaskButton aria-label="Imprimante"><Printer/></TaskButton>
				{taskIcons.map(([name, icon]) => <TaskButton key={name} aria-label={name}>{icon}</TaskButton>)}
				<TaskButton $open aria-label="Chrome"><Chrome/></TaskButton>
				<TaskButton $open $active aria-label="ProRealTime"><Candles w={21} h={22}/></TaskButton>
				<Clock>
					<span>16:26</span>
					<span>21/12/2023</span>
				</Clock>
			</Taskbar>
		</Page>
	);
}
